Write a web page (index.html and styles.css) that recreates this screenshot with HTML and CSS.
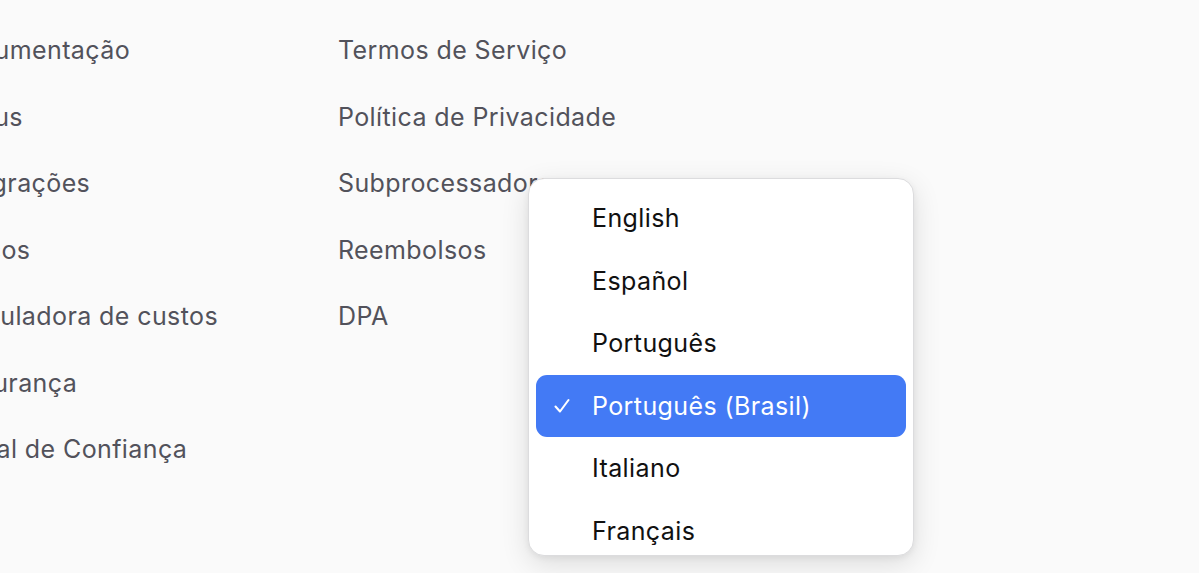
FILE: index.html
```html
<!DOCTYPE html>
<html lang="pt-BR">
<head>
  <meta charset="UTF-8" />
  <meta name="viewport" content="width=device-width, initial-scale=1.0"/>
  <title>Rodapé</title>
  <link rel="stylesheet" href="styles.css">
</head>
<body>
  <footer class="footer">
    <ul class="links col-product">
      <li>Documentação</li>
      <li>Status</li>
      <li>Integrações</li>
      <li>Preços</li>
      <li>Calculadora de custos</li>
      <li>Segurança</li>
      <li>Portal de Confiança</li>
    </ul>
    <ul class="links col-legal">
      <li>Termos de Serviço</li>
      <li>Política de Privacidade</li>
      <li>Subprocessadores</li>
      <li>Reembolsos</li>
      <li>DPA</li>
    </ul>
  </footer>

  <div class="lang-menu">
    <ul class="lang-list">
      <li class="lang-item">English</li>
      <li class="lang-item">Español</li>
      <li class="lang-item">Português</li>
      <li class="lang-item selected">
        <svg class="check" viewBox="0 0 20 20" width="20" height="20">
          <path d="M3.5 10.5 L8 15.5 L16.5 4" fill="none" stroke="#fff" stroke-width="2.1" stroke-linecap="round" stroke-linejoin="round"/>
        </svg>
        Português (Brasil)
      </li>
      <li class="lang-item">Italiano</li>
      <li class="lang-item">Français</li>
      <li class="lang-item">Deutsch</li>
    </ul>
  </div>
</body>
</html>
```

FILE: styles.css
```css
body {
  margin: 0;
  font-family: 'Inter', 'Noto Sans', sans-serif;
  background-color: #fafafa;
  height: 573px;
  overflow: hidden;
  position: relative;
}

.footer {
  display: flex;
  padding-top: 17px;
  margin-left: -54px;
}

.links {
  list-style: none;
  margin: 0;
  padding: 0;
  font-size: 25px;
  letter-spacing: 0.4px;
  color: #52525b;
}

.links li {
  height: 66.5px;
  line-height: 66.5px;
  white-space: nowrap;
}

.col-product {
  width: 392px;
}

.lang-menu {
  position: absolute;
  left: 528px;
  top: 178px;
  width: 386px;
  height: 378px;
  box-sizing: border-box;
  background-color: #fff;
  border: 1px solid #dcdcde;
  border-radius: 16px;
  box-shadow: 0 8px 28px rgba(0, 0, 0, 0.12), 0 2px 6px rgba(0, 0, 0, 0.06);
  overflow: hidden;
}

.lang-list {
  list-style: none;
  margin: 0;
  padding: 8px 7px;
}

.lang-item {
  position: relative;
  height: 62.5px;
  line-height: 62.5px;
  padding-left: 56px;
  font-size: 25px;
  letter-spacing: 0.4px;
  color: #111;
  border-radius: 11px;
}

.lang-item.selected {
  background-color: #437af5;
  color: #fff;
}

.check {
  position: absolute;
  left: 16px;
  top: 21px;
}
```
